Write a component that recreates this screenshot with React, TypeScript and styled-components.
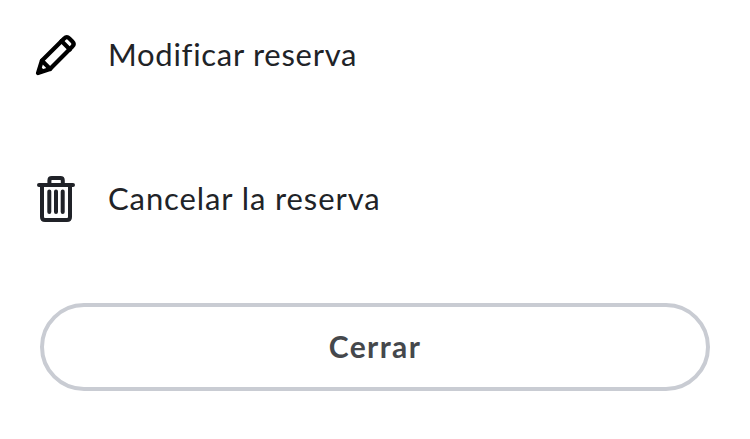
import React from "react";
import styled, { createGlobalStyle } from "styled-components";

const GlobalStyle = createGlobalStyle`
  * { box-sizing: border-box; }
  body { margin: 0; background: #fff; font-family: Lato, "Open Sans", sans-serif; }
`;

const Sheet = styled.main`
  display: flex;
  flex-direction: column;
  width: 750px;
  height: 439px;
  overflow: hidden;
  background: #fff;
`;

const ActionRow = styled.div<{ $height: number }>`
  display: flex;
  align-items: center;
  height: ${({ $height }) => $height}px;
  padding-left: 32px;
  flex: none;
`;

const ActionIcon = styled.svg`
  width: 48px;
  height: 56px;
  flex: none;
  margin-right: 28px;
`;

const Label = styled.span<{ $spacing: number }>`
  padding-bottom: 2px;
  font-size: 31px;
  line-height: 40px;
  color: #212327;
  letter-spacing: ${({ $spacing }) => $spacing}px;
  font-variant-ligatures: none;
  white-space: nowrap;
`;

const CloseButton = styled.button`
  width: 670px;
  height: 88px;
  margin: 15px 40px 0;
  padding: 0 0 2px;
  flex: none;
  border: 4px solid #c9ccd3;
  border-radius: 44px;
  background: #fff;
  color: #45484c;
  font: 700 30px/40px Lato, "Open Sans", sans-serif;
  letter-spacing: 1.4px;
`;

export default function App() {
  return (
    <>
      <GlobalStyle />
      <Sheet>
        <ActionRow $height={110}>
          <ActionIcon viewBox="32 27 48 56" fill="none" stroke="#000" strokeWidth="4.2" strokeLinejoin="round" strokeLinecap="round">
            <path d="M38 73 41.8 60.8 64.2 38.4Q66.8 35.8 69.4 38.4L72.4 41.4Q75 44 72.4 46.6L50 69Z" />
            <path d="M42 60.8 50.2 69M61.5 41.1 69.9 49.5" />
            <path d="M38 73 39.8 67.2 43.9 71.1Z" fill="#000" strokeWidth="2" />
          </ActionIcon>
          <Label $spacing={0.72}>Modificar reserva</Label>
        </ActionRow>
        <ActionRow $height={178}>
          <ActionIcon viewBox="32 171 48 56" fill="none" stroke="#202228" strokeWidth="4" strokeLinejoin="round" strokeLinecap="round">
            <path d="M39 185H73M49.4 185V180.4Q49.4 178 51.8 178H60.4Q62.8 178 62.8 180.4V185" />
            <path d="M42 185V217Q42 220 45 220H67Q70 220 70 217V185" />
            <path d="M49.3 191.5V212M56 191.5V212M62.7 191.5V212" />
          </ActionIcon>
          <Label $spacing={0.9}>Cancelar la reserva</Label>
        </ActionRow>
        <CloseButton type="button">Cerrar</CloseButton>
      </Sheet>
    </>
  );
}
